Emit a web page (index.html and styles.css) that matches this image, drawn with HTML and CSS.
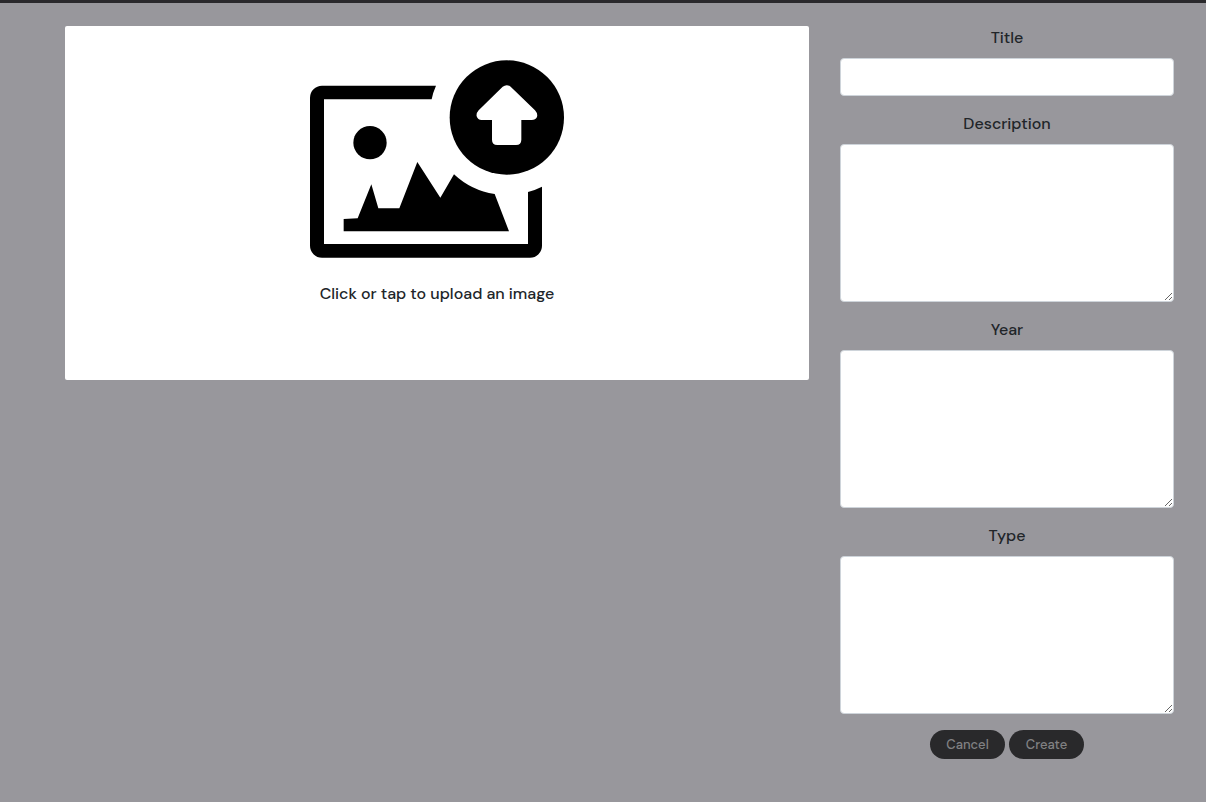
FILE: index.html
```html
<!DOCTYPE html>
<html lang="en">
<head>
<meta charset="utf-8">
<title>Upload an image</title>
<link rel="stylesheet" href="styles.css">
</head>
<body>
<form class="editor">
  <label class="upload">
    <input class="upload-input" type="file" accept="image/*">
    <svg class="upload-icon" viewBox="30 30 762 594" aria-hidden="true">
      <path d="M408 107H66A36 36 0 0 0 30 143V587A36 36 0 0 0 66 623H690A36 36 0 0 0 726 587V410Q706 420 684 426V582H72V148H395Q399 127 408 107Z"/>
      <circle cx="210" cy="278" r="50"/>
      <path d="M131 544V507L173 505L214 403L235 475H298L352 336L421 443L462 373Q514 422 584 432L627 544Z"/>
      <circle cx="620.500" cy="202.500" r="171.500"/>
      <path class="arrow" d="M608 110Q620 101 632 110L705 181Q714 191 711 201Q707 210 695 210H664V269Q664 285 648 285H592Q576 285 576 269V210H545Q533 210 530 199Q528 190 536 181Z"/>
    </svg>
    <span>Click or tap to upload an image</span>
  </label>
  <div class="fields">
    <div class="field">
      <label for="title">Title</label>
      <input class="control" id="title" type="text">
    </div>
    <div class="field">
      <label for="description">Description</label>
      <textarea class="control" id="description" rows="6"></textarea>
    </div>
    <div class="field">
      <label for="year">Year</label>
      <textarea class="control" id="year" rows="6"></textarea>
    </div>
    <div class="field">
      <label for="type">Type</label>
      <textarea class="control" id="type" rows="6"></textarea>
    </div>
    <div class="actions">
      <button class="pill" type="button">Cancel</button>
      <button class="pill" type="submit">Create</button>
    </div>
  </div>
</form>
</body>
</html>
```
FILE: styles.css
```css
* {
  box-sizing: border-box;
}

body {
  margin: 0;
  border-top: 3px solid #2a292c;
  background: #98979c;
  color: #212529;
  font: 500 16px/24px "DM Sans", Inter, sans-serif;
}

.editor {
  display: grid;
  grid-template-columns: 744fr 334fr;
  align-items: start;
  gap: 31px;
  padding: 23px 32px 40px 65px;
}

.upload {
  position: relative;
  display: flex;
  flex-direction: column;
  align-items: center;
  gap: 24px;
  min-height: 354px;
  padding: 34px 16px;
  border-radius: 2px;
  background: #fff;
  cursor: pointer;
}

.upload-input {
  position: absolute;
  width: 1px;
  height: 1px;
  opacity: 0;
}

.upload-icon {
  width: 254px;
  height: 198px;
}

.arrow {
  fill: #fff;
}

.fields {
  display: flex;
  flex-direction: column;
  gap: 16px;
}

.field {
  display: flex;
  flex-direction: column;
  gap: 8px;
  text-align: center;
}

.control {
  display: block;
  width: 100%;
  padding: 6px 12px;
  border: 1px solid #ced4da;
  border-radius: 4px;
  background: #fff;
  color: #212529;
  font: 400 16px/24px "DM Sans", Inter, sans-serif;
}

textarea.control {
  resize: vertical;
}

.actions {
  display: flex;
  justify-content: center;
  gap: 4px;
}

.pill {
  min-width: 75px;
  padding: 5px 16px 4px;
  border: 0;
  border-radius: 15px;
  background: #29292b;
  color: #818183;
  font: 500 13px/20px "DM Sans", Inter, sans-serif;
}
```
